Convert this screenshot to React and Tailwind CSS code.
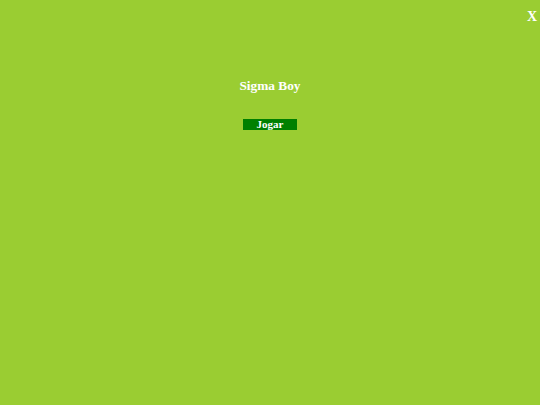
export default function App() {
  return (
    <div className="relative w-[540px] h-[405px] bg-[#9acd32] overflow-hidden" style={{ fontFamily: '"Liberation Serif", serif' }}>
      <button className="absolute top-[9px] right-[3px] text-white font-bold text-[14px] leading-[16px] bg-transparent p-0">X</button>
      <div className="flex flex-col items-center pt-[78px]">
        <h1 className="text-white font-bold text-[13.33px] leading-[16px]">Sigma Boy</h1>
        <button className="mt-[25px] w-[54px] h-[11px] bg-[#008000] text-white font-bold text-[11px] leading-[11px] flex items-center justify-center p-0">Jogar</button>
      </div>
    </div>
  );
}
